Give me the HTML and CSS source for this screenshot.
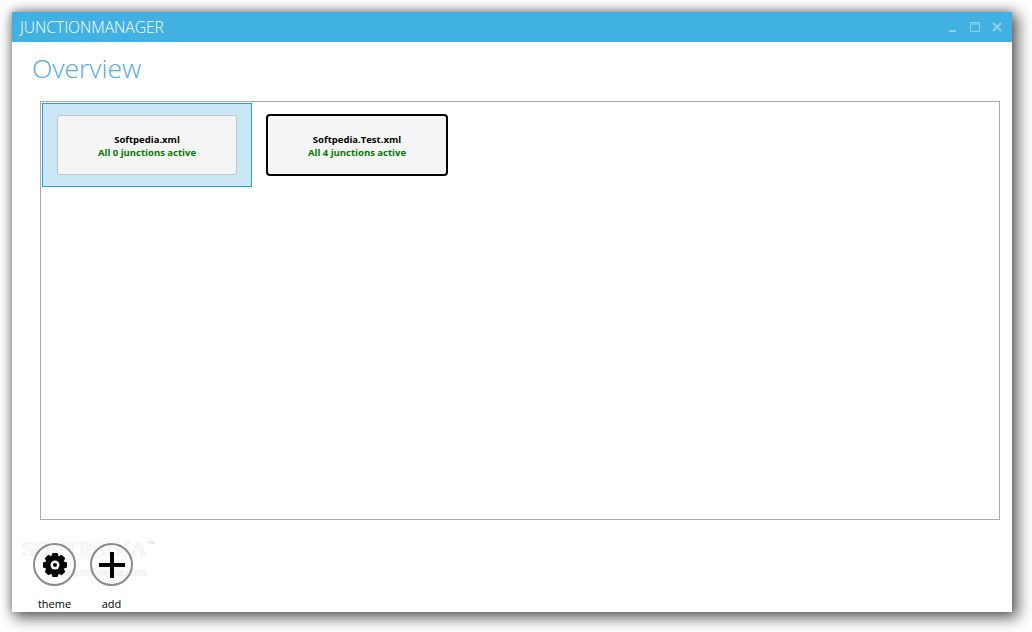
FILE: index.html
```html
<!DOCTYPE html>
<html lang="en">
<head>
<meta charset="utf-8">
<title>JunctionManager</title>
<link rel="stylesheet" href="styles.css">
</head>
<body>
<div class="window">
  <header class="titlebar">
    <span class="app-title">JUNCTIONMANAGER</span>
    <div class="controls">
      <svg width="10" height="10" viewBox="0 0 10 10"><rect x="1" y="8" width="7" height="2" fill="#8fd0ec"/></svg>
      <svg width="10" height="10" viewBox="0 0 10 10"><path d="M.5 1V9.500H9.500V.5H.5V2H9.500" fill="none" stroke="#8fd0ec"/></svg>
      <svg width="10" height="10" viewBox="0 0 10 10"><path d="M1 1L9 9M9 1L1 9" fill="none" stroke="#8fd0ec" stroke-width="2"/></svg>
    </div>
  </header>
  <main class="content">
    <h1 class="page-title">Overview</h1>
    <section class="list">
      <div class="item item-selected">
        <div class="card">
          <div class="card-name">Softpedia.xml</div>
          <div class="card-status">All 0 junctions active</div>
        </div>
      </div>
      <div class="item item-second">
        <div class="card card-focus">
          <div class="card-name">Softpedia.Test.xml</div>
          <div class="card-status">All 4 junctions active</div>
        </div>
      </div>
    </section>
    <div class="watermark" aria-hidden="true">
      <div class="wm-main">SOFTPEDIA<sup class="wm-tm">™</sup></div>
      <div class="wm-url">www.softpedia.com</div>
    </div>
    <footer class="actions">
      <div class="action">
        <div class="round">
          <svg width="26" height="26" viewBox="0 0 26 26">
            <g fill="#000">
              <circle cx="13" cy="13" r="8"/>
              <path d="M10.500 1H15.500L17.500 7H8.500Z"/>
              <path d="M10.500 1H15.500L17.500 7H8.500Z" transform="rotate(45 13 13)"/>
              <path d="M10.500 1H15.500L17.500 7H8.500Z" transform="rotate(90 13 13)"/>
              <path d="M10.500 1H15.500L17.500 7H8.500Z" transform="rotate(135 13 13)"/>
              <path d="M10.500 1H15.500L17.500 7H8.500Z" transform="rotate(180 13 13)"/>
              <path d="M10.500 1H15.500L17.500 7H8.500Z" transform="rotate(225 13 13)"/>
              <path d="M10.500 1H15.500L17.500 7H8.500Z" transform="rotate(270 13 13)"/>
              <path d="M10.500 1H15.500L17.500 7H8.500Z" transform="rotate(315 13 13)"/>
            </g>
            <circle cx="13" cy="13" r="4.500" fill="#fff"/>
            <circle cx="13" cy="13" r="2" fill="#000"/>
          </svg>
        </div>
        <span class="action-label">theme</span>
      </div>
      <div class="action">
        <div class="round">
          <svg width="26" height="26" viewBox="0 0 26 26"><path d="M13 0V26M0 13H26" stroke="#000" stroke-width="4" fill="none"/></svg>
        </div>
        <span class="action-label">add</span>
      </div>
    </footer>
  </main>
</div>
</body>
</html>
```
FILE: styles.css
```css
* { box-sizing: border-box; }
html, body { margin: 0; height: 100%; background: #fff; overflow: hidden; }
body { padding: 12px 20px 20px 12px; font-family: "Open Sans", "Noto Sans", sans-serif; }
.window {
  width: 1000px; height: 600px; display: flex; flex-direction: column; background: #fff;
  box-shadow: 4px 4px 14px 2px rgba(0,0,0,.62), -1px -1px 8px rgba(0,0,0,.22);
}
.titlebar {
  height: 30px; flex: none; background: #41b1e1; color: #fff; display: flex; align-items: center;
  justify-content: space-between; padding: 0 10px 0 8px;
}
.app-title { font-size: 15.600px; font-weight: 300; line-height: 30px; white-space: nowrap; }
.controls { display: flex; gap: 12px; align-items: center; }
.content { position: relative; flex: 1; display: flex; flex-direction: column; padding: 0 12px 0 20px; }
.page-title { margin: 8px 0 15px; font-size: 26.500px; line-height: 36px; height: 36px; font-weight: 300; color: #58a8e0; }
.list {
  margin-left: 8px; width: 960px; height: 419px; border: 1px solid #aaa; padding: 1px;
  display: flex; align-items: flex-start;
}
.item { width: 210px; height: 84px; padding: 11px 14px; border: 1px solid transparent; display: flex; align-items: center; }
.item-second { width: 212px; height: 86px; padding: 10px 14px 12px 13px; }
.item-selected { background: #cbe6f5; border-color: #26a0da; }
.card {
  width: 180px; height: 60px; background: #f5f5f5; border: 1px solid #c4c4c4; border-radius: 3px; padding-top: 2px;
  display: flex; flex-direction: column; align-items: center; justify-content: center;
  font-size: 9.500px; font-weight: 700; line-height: 13px;
}
.card-focus { width: 182px; height: 62px; border: 2px solid #000; border-radius: 4px; flex: none; }
.card-name { color: #000; }
.card-status { color: #007a00; }
.actions { position: relative; display: flex; gap: 14px; margin-top: 23px; margin-left: 1px; }
.action { width: 43px; display: flex; flex-direction: column; align-items: center; }
.round {
  width: 43px; height: 43px; border: 2px solid #8a8a8a; border-radius: 50%; display: flex;
  align-items: center; justify-content: center; flex: none;
}
.action-label { margin-top: 10px; font-size: 11px; line-height: 16px; color: #000; white-space: nowrap; }
.watermark { position: absolute; left: 10px; top: 495px; pointer-events: none; color: #fff; }
.wm-main {
  font-family: "Liberation Serif", serif; font-size: 22px; line-height: 24px; letter-spacing: .800px; white-space: nowrap;
  text-shadow: 0 0 1px #bbb;
}
.wm-tm { font-size: 7px; color: #ccc; text-shadow: none; vertical-align: 10px; line-height: 0; }
.wm-url { margin: 5px 0 0 32px; font-size: 10px; line-height: 12px; white-space: nowrap; text-shadow: 0 0 1px #bbb; }
```
